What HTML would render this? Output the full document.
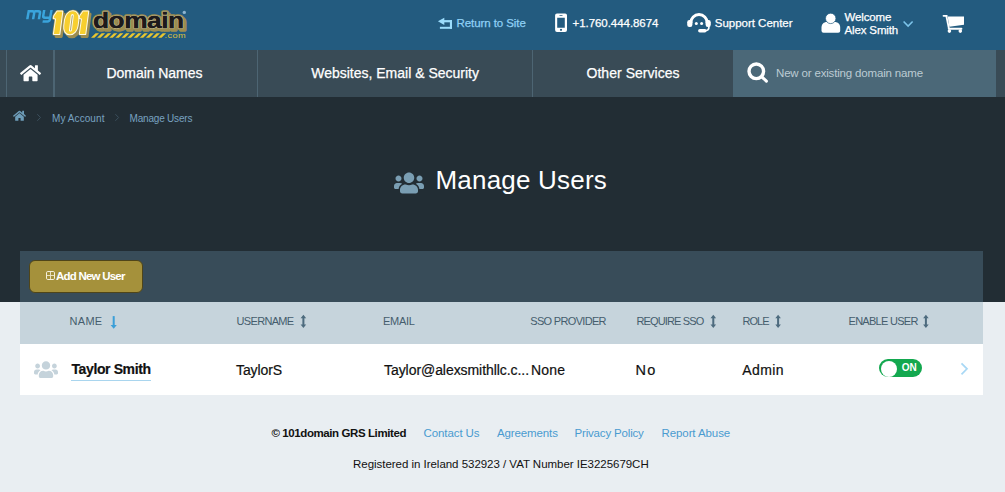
<!DOCTYPE html>
<html>
<head>
<meta charset="utf-8">
<title>Manage Users</title>
<style>
*{box-sizing:border-box;margin:0;padding:0}
html,body{width:1005px;height:492px;overflow:hidden}
body{font-family:"Liberation Sans",sans-serif;background:#e9eef2;position:relative;color:#fff}
.abs{position:absolute;white-space:nowrap}
#hdr{left:0;top:0;width:1005px;height:50px;background:#235b7f}
#nav{left:0;top:50px;width:1005px;height:47px;background:#394b56}
#dark{left:0;top:97px;width:1005px;height:205px;background:#222d34}
.vl{top:50px;height:47px;background:#4d6573}
.navt{top:65px;line-height:16px;font-size:14px;color:#fff;-webkit-text-stroke:0.25px #fff}
#search{left:733px;top:50px;width:263px;height:47px;background:#4b6878}
#toolbar{left:20px;top:251px;width:963px;height:51px;background:#384c59}
#thead{left:20px;top:302px;width:963px;height:42px;background:#c6d4dc}
#row{left:20px;top:344px;width:963px;height:51px;background:#fff}
#btn{left:29px;top:260px;width:114px;height:33px;background:#a5913b;border:1px solid #4f4519;border-radius:6px}
.th{top:314px;line-height:14px;font-size:11px;color:#455d6d}
.td{top:361px;line-height:18px;font-size:14px;color:#111;-webkit-text-stroke:0.2px #111}
.top{font-size:11.5px;color:#fff;-webkit-text-stroke:0.25px currentColor}
.bc{top:112px;font-size:10px;color:#78a2c0;line-height:13px}
.ft{font-size:11.5px;line-height:14px}
svg{position:absolute;overflow:visible}
</style>
</head>
<body>
<div class="abs" id="hdr"></div>
<div class="abs" id="nav"></div>
<div class="abs" id="dark"></div>

<!-- logo -->
<svg id="logo" style="left:0;top:0" width="200" height="50" viewBox="0 0 200 50">
  <g font-family="Liberation Sans, sans-serif" font-weight="bold">
    <g transform="translate(0,19.300) skewX(-10) translate(0,-19.300)" fill="none" stroke="#3aa4dc" stroke-width="2.500" stroke-linejoin="round"><path d="M27.300 19.300V10.100M27.300 11.300H31.100Q33.100 11.300 33.100 13.300V19.300M33.100 11.300H36.900Q38.900 11.300 38.900 13.300V19.300"/><path d="M42.600 10.100V15.600Q42.600 17.800 44.800 17.800H49.900M49.900 10.100V19.600Q49.900 21.500 47.900 21.500H43"/></g>
    <defs><g id="g101">
      <path id="one" d="M57.300 11.500h5l-2.900 22.500h-5.500l2.200-15.200l-2.300-.700l.400-2.100z"/>
      <use href="#one" x="25.900"/>
      <rect x="-6.700" y="-11.500" width="13.400" height="23" rx="6.300" ry="8.500" transform="translate(71.300,22.800) skewX(-7.200)"/>
    </g></defs>
    <use href="#g101" x="2" y="2.600" fill="#9c8d50" stroke="#9c8d50" stroke-width="2.600" stroke-linejoin="round"/>
    <use href="#g101" fill="#9c8d50" stroke="#9c8d50" stroke-width="3.200" stroke-linejoin="round"/>
    <use href="#g101" fill="#fdfbe8" stroke="#fdfbe8" stroke-width="2" stroke-linejoin="round"/>
    <use href="#g101" fill="#f7cf2f"/>
    <g transform="translate(71.400,22.800) skewX(-7.200)"><rect x="-1.500" y="-8.800" width="3" height="17.600" rx="1.500" fill="#fdfbe8"/><rect x="-0.500" y="-7.600" width="1" height="15.200" rx="0.500" fill="#b0a470"/></g>
    <g transform="translate(93,27.900) scale(1.195,1)">
      <text x="1.600" y="2" font-size="22" fill="#9c8d50" stroke="#9c8d50" stroke-width="3.400" stroke-linejoin="round" letter-spacing="-0.400">domain</text>
      <text x="0" y="0" font-size="22" fill="#1d1a1b" stroke="#9c8d50" stroke-width="3.400" paint-order="stroke" stroke-linejoin="round" letter-spacing="-0.400">domain</text>
      <text x="0" y="0" font-size="22" fill="#1d1a1b" stroke="#d8cfa8" stroke-width="1.200" paint-order="stroke" stroke-linejoin="round" letter-spacing="-0.400">domain</text>
      <text x="0" y="0" font-size="22" fill="#1d1a1b" stroke="#1d1a1b" stroke-width="0.300" letter-spacing="-0.400">domain</text>
    </g>
    <g fill="#e9c62f">
      <path d="M91 37.8l4.6-4.6h3.4l-4.6 4.600zM97.100 37.800l4.600-4.600h3.400l-4.600 4.600zM103.200 37.800l4.600-4.600h3.400l-4.600 4.600zM109.300 37.800l4.600-4.600h3.400l-4.600 4.600zM115.400 37.800l4.600-4.600h3.400l-4.600 4.600zM121.500 37.800l4.600-4.600h3.400l-4.600 4.600zM127.600 37.800l4.600-4.600h3.400l-4.600 4.600zM133.700 37.800l4.600-4.600h3.400l-4.600 4.600zM139.800 37.800l4.600-4.600h3.400l-4.600 4.600zM145.900 37.800l4.600-4.600h3.400l-4.600 4.600zM152 37.800l4.600-4.600h3.400l-4.600 4.600zM158.100 37.800l4.600-4.600h3.400l-4.600 4.600z"/>
    </g>
    <text x="164.600" y="37.700" font-size="8" fill="#dfc03c" letter-spacing="0.3" font-weight="normal" transform="translate(164.600,0) scale(1.15,1) translate(-164.600,0)">.com</text>
    <circle cx="184.300" cy="12.400" r="1.700" fill="#8db4cf"/>
  </g>
</svg>

<!-- top links -->
<svg style="left:0;top:0" width="1005" height="50" viewBox="0 0 1005 50">
  <!-- return icon -->
  <g fill="#9bdcfc">
    <path d="M437.900 21.300l6.400-3.600v7.200z"/>
    <rect x="444" y="20.100" width="8" height="2.200"/>
    <rect x="449.900" y="20.100" width="2.100" height="8.700"/>
    <rect x="439.900" y="26.800" width="12.100" height="2"/>
  </g>
  <!-- phone icon -->
  <path fill="#fff" fill-rule="evenodd" d="M557 13.400h8.100a1.900 1.900 0 0 1 1.900 1.900v14.800a1.900 1.900 0 0 1-1.900 1.900H557a1.900 1.900 0 0 1-1.900-1.900V15.300a1.900 1.900 0 0 1 1.900-1.900zM557.200 17.700v10h7.600v-10zM559.500 15.200v0.900h3v-0.900zM561 28.700a1.100 1.100 0 1 0 0.010 0z"/>
  <!-- headset -->
  <g fill="none" stroke="#fff" stroke-linecap="round">
    <path d="M690.800 22.800a8.200 8.200 0 0 1 16.400 0" stroke-width="3"/>
    <path d="M708.900 26.500c0.300 3.200-1.500 4.300-4.500 4.300" stroke-width="1.700"/>
  </g>
  <g fill="#fff">
    <rect x="687.200" y="20.100" width="5.200" height="6.900" rx="2.200"/>
    <rect x="705.600" y="20.100" width="5.200" height="6.900" rx="2.200"/>
    <circle cx="696.300" cy="23.500" r="1.500"/>
    <circle cx="701.600" cy="23.500" r="1.500"/>
    <rect x="698.100" y="29" width="8.400" height="3.400" rx="1.700"/>
  </g>
  <!-- user -->
  <path fill="#fff" d="M821.500 30.800V27.600C821.500 24.300 823.800 22.100 826.900 22.100H834.800C837.900 22.100 840.200 24.300 840.200 27.600V30.800A2 2 0 0 1 838.200 32.800H823.500A2 2 0 0 1 821.500 30.800Z"/>
  <circle cx="830.700" cy="18.400" r="5.200" fill="#fff" stroke="#235b7f" stroke-width="0.700"/>
  <!-- chevron down -->
  <path d="M903.600 21.500l4.500 4.500 4.500-4.500" fill="none" stroke="#7cc4ea" stroke-width="1.600"/>
  <!-- cart -->
  <g fill="#fff">
    <path d="M947.600 16.600H964V24.800L949.400 26.700Z"/>
    <rect x="942.600" y="14.900" width="5" height="1.800" rx="0.900"/>
    <path d="M946.200 15.200l2.700 13.300" stroke="#fff" stroke-width="1.800" fill="none"/>
    <rect x="947.800" y="27.800" width="14.600" height="1.900" rx="0.900"/>
    <circle cx="949.400" cy="31.100" r="1.800"/>
    <circle cx="960.300" cy="31.100" r="1.800"/>
  </g>
</svg>
<div class="abs top" id="t_return" style="left:456.500px;top:15px;line-height:16px;color:#8fd0f5;letter-spacing:-0.08px">Return to Site</div>
<div class="abs top" id="t_phone" style="left:572.500px;top:15px;line-height:16px;letter-spacing:-0.05px">+1.760.444.8674</div>
<div class="abs top" id="t_support" style="left:714.800px;top:15px;line-height:16px;letter-spacing:-0.02px">Support Center</div>
<div class="abs top" id="t_welcome" style="left:844.500px;top:11px;line-height:13px;letter-spacing:-0.15px">Welcome</div>
<div class="abs top" id="t_alex" style="left:844.500px;top:24px;line-height:13px;letter-spacing:-0.14px">Alex Smith</div>

<!-- nav -->
<div class="abs vl" style="left:6px;width:1px"></div>
<div class="abs vl" style="left:53px;width:2px"></div>
<div class="abs vl" style="left:257px;width:1px"></div>
<div class="abs vl" style="left:532px;width:1px"></div>
<svg style="left:20.200px;top:63.550px" width="21.100" height="18.300" viewBox="0 0 576 512" preserveAspectRatio="none"><path fill="#fff" d="M280.370 148.260L96 300.110V464a16 16 0 0 0 16 16l112.060-.290a16 16 0 0 0 15.920-16V368a16 16 0 0 1 16-16h64a16 16 0 0 1 16 16v95.640a16 16 0 0 0 16 16.050L464 480a16 16 0 0 0 16-16V300L295.670 148.260a12.190 12.190 0 0 0-15.300 0zM571.600 251.470L488 182.560V44.050a12 12 0 0 0-12-12h-56a12 12 0 0 0-12 12v72.610L318.470 43a48 48 0 0 0-61 0L4.340 251.470a12 12 0 0 0-1.600 16.900l25.500 31A12 12 0 0 0 45.150 301l235.220-193.740a12.190 12.190 0 0 1 15.300 0L530.900 301a12 12 0 0 0 16.900-1.600l25.500-31a12 12 0 0 0-1.700-16.930z"/></svg>
<div class="abs navt" id="n1" style="left:106.500px;letter-spacing:-0.05px">Domain Names</div>
<div class="abs navt" id="n2" style="left:311.200px;letter-spacing:0px">Websites, Email &amp; Security</div>
<div class="abs navt" id="n3" style="left:586.500px;letter-spacing:0.04px">Other Services</div>
<div class="abs" id="search"></div>
<svg style="left:0;top:50px" width="1005" height="47" viewBox="0 50 1005 47">
  <circle cx="756.300" cy="71.300" r="7.300" fill="none" stroke="#fff" stroke-width="3.400"/>
  <path d="M761.800 76.800l4.600 4.400" stroke="#fff" stroke-width="3" stroke-linecap="round"/>
</svg>
<div class="abs" id="ph" style="left:776px;top:66px;font-size:11.5px;line-height:15px;color:#bccbd3;letter-spacing:-0.17px">New or existing domain name</div>

<!-- breadcrumb -->
<svg style="left:13.400px;top:110.200px" width="13" height="11.550" viewBox="0 0 576 512"><path fill="#6d9cb8" d="M280.370 148.260L96 300.110V464a16 16 0 0 0 16 16l112.060-.290a16 16 0 0 0 15.920-16V368a16 16 0 0 1 16-16h64a16 16 0 0 1 16 16v95.640a16 16 0 0 0 16 16.050L464 480a16 16 0 0 0 16-16V300L295.670 148.260a12.190 12.190 0 0 0-15.300 0zM571.600 251.470L488 182.560V44.050a12 12 0 0 0-12-12h-56a12 12 0 0 0-12 12v72.610L318.470 43a48 48 0 0 0-61 0L4.340 251.470a12 12 0 0 0-1.600 16.900l25.500 31A12 12 0 0 0 45.150 301l235.220-193.740a12.190 12.190 0 0 1 15.300 0L530.900 301a12 12 0 0 0 16.900-1.600l25.500-31a12 12 0 0 0-1.700-16.930z"/></svg>
<svg style="left:0;top:97px" width="300" height="40" viewBox="0 97 300 40">
  <path d="M37.300 114.200l3.200 3.300-3.200 3.300M115.400 114.200l3.200 3.300-3.200 3.300" fill="none" stroke="#3b4f5c" stroke-width="1"/>
</svg>
<div class="abs bc" id="b1" style="left:52px;letter-spacing:0.08px">My Account</div>
<div class="abs bc" id="b2" style="left:129.500px;letter-spacing:-0.19px">Manage Users</div>

<!-- title -->
<svg style="left:394.100px;top:170.600px" width="30" height="24" viewBox="0 0 640 512"><path fill="#7a9eb3" d="M96 224c35.300 0 64-28.700 64-64s-28.700-64-64-64-64 28.700-64 64 28.700 64 64 64zm448 0c35.300 0 64-28.700 64-64s-28.700-64-64-64-64 28.700-64 64 28.700 64 64 64zm32 32h-64c-17.600 0-33.500 7.100-45.100 18.600 40.300 22.100 68.900 62 75.100 109.400h66c17.700 0 32-14.300 32-32v-32c0-35.300-28.700-64-64-64zm-256 0c61.900 0 112-50.100 112-112S381.900 32 320 32 208 82.100 208 144s50.100 112 112 112zm76.800 32h-8.300c-20.800 10-43.900 16-68.500 16s-47.600-6-68.500-16h-8.300C179.600 288 128 339.600 128 403.200V432c0 26.500 21.500 48 48 48h288c26.500 0 48-21.500 48-48v-28.800c0-63.600-51.600-115.200-115.200-115.200zm-223.700-13.400C161.500 263.100 145.600 256 128 256H64c-35.300 0-64 28.700-64 64v32c0 17.700 14.300 32 32 32h65.900c6.300-47.400 34.900-87.300 75.200-109.400z"/></svg>
<div class="abs" id="title" style="left:435.500px;top:164px;font-size:26px;line-height:32px;color:#fff;letter-spacing:0.2px">Manage Users</div>

<div class="abs" id="toolbar"></div>
<div class="abs" id="btn"></div>
<svg style="left:45.500px;top:270.800px" width="9" height="9" viewBox="0 0 9 9"><rect x="0.500" y="0.500" width="8" height="8" rx="1.300" fill="none" stroke="#f4efdc" stroke-width="1"/><path d="M4.500 1v7M1 4.500h7" stroke="#efe8cc" stroke-width="0.900"/></svg>
<div class="abs" id="addnew" style="left:56px;top:267.500px;font-size:11.500px;font-weight:bold;line-height:16px;color:#fff;letter-spacing:-0.78px">Add New User</div>

<div class="abs" id="thead"></div>
<div class="abs th" id="h1" style="left:69.500px;letter-spacing:0.3px">NAME</div>
<div class="abs th" id="h2" style="left:236.600px;letter-spacing:-0.69px">USERNAME</div>
<div class="abs th" id="h3" style="left:383px;letter-spacing:-0.3px">EMAIL</div>
<div class="abs th" id="h4" style="left:530.300px;letter-spacing:-0.68px">SSO PROVIDER</div>
<div class="abs th" id="h5" style="left:636.500px;letter-spacing:-0.86px">REQUIRE SSO</div>
<div class="abs th" id="h6" style="left:742.400px;letter-spacing:-0.9px">ROLE</div>
<div class="abs th" id="h7" style="left:848.500px;letter-spacing:-0.71px">ENABLE USER</div>
<svg style="left:0;top:302px" width="1005" height="42" viewBox="0 302 1005 42">
  <g fill="#3b9fd8"><rect x="112.700" y="316.100" width="2" height="10"/><path d="M110.600 325l3.100 3.700 3.100-3.700z"/></g>
  <g fill="#4d6b7e" id="sorts">
    <path id="srt" d="M303.400 314.800l2.800 3.400h-1.800v6.300h1.800l-2.800 3.400-2.800-3.400h1.800v-6.300h-1.800z"/>
    <use href="#srt" x="409.900"/>
    <use href="#srt" x="474.700"/>
    <use href="#srt" x="622.500"/>
  </g>
</svg>

<div class="abs" id="row"></div>
<svg style="left:34px;top:359.800px" width="24" height="19.200" viewBox="0 0 640 512"><path fill="#c5d3db" d="M96 224c35.300 0 64-28.700 64-64s-28.700-64-64-64-64 28.700-64 64 28.700 64 64 64zm448 0c35.300 0 64-28.700 64-64s-28.700-64-64-64-64 28.700-64 64 28.700 64 64 64zm32 32h-64c-17.600 0-33.500 7.100-45.100 18.600 40.300 22.100 68.900 62 75.100 109.400h66c17.700 0 32-14.300 32-32v-32c0-35.300-28.700-64-64-64zm-256 0c61.900 0 112-50.100 112-112S381.900 32 320 32 208 82.100 208 144s50.100 112 112 112zm76.800 32h-8.300c-20.800 10-43.900 16-68.500 16s-47.600-6-68.500-16h-8.300C179.600 288 128 339.600 128 403.200V432c0 26.500 21.500 48 48 48h288c26.500 0 48-21.500 48-48v-28.800c0-63.600-51.600-115.200-115.200-115.200zm-223.700-13.400C161.500 263.100 145.600 256 128 256H64c-35.300 0-64 28.700-64 64v32c0 17.700 14.300 32 32 32h65.900c6.300-47.400 34.900-87.300 75.200-109.400z"/></svg>
<div class="abs td" id="d1" style="left:71.500px;top:360px;font-size:14px;font-weight:bold;letter-spacing:-0.39px">Taylor Smith</div>
<div class="abs" style="left:71px;top:380px;width:80px;height:1px;background:#a9d5ee"></div>
<div class="abs td" id="d2" style="left:236px;letter-spacing:-0.1px">TaylorS</div>
<div class="abs td" id="d3" style="left:384px;letter-spacing:-0.06px">Taylor@alexsmithllc.c...</div>
<div class="abs td" id="d4" style="left:530.900px;letter-spacing:0.2px">None</div>
<div class="abs td" id="d5" style="left:635.500px;font-size:14.500px;letter-spacing:1.2px">No</div>
<div class="abs td" id="d6" style="left:742.300px;letter-spacing:0.37px">Admin</div>
<div class="abs" style="left:879px;top:359px;width:43px;height:18px;border-radius:9px;background:#13a84f"></div>
<div class="abs" style="left:880.700px;top:360.500px;width:16px;height:16px;border-radius:8px;background:#fff"></div>
<div class="abs" id="on" style="left:901.800px;top:361.500px;font-size:10px;line-height:12px;font-weight:bold;color:#fff;letter-spacing:0px">ON</div>
<svg style="left:955px;top:355px" width="20" height="26" viewBox="955 355 20 26"><path d="M961.500 363.300l5.500 5.500-5.500 5.500" fill="none" stroke="#a8d8f5" stroke-width="1.700"/></svg>

<!-- footer -->
<div class="abs ft" id="f1" style="left:271.500px;top:426px;color:#111;font-weight:bold;letter-spacing:-0.41px">© 101domain GRS Limited</div>
<div class="abs ft" id="f2" style="left:423.500px;top:426px;color:#4a9bd0;letter-spacing:-0.09px">Contact Us</div>
<div class="abs ft" id="f3" style="left:497px;top:426px;color:#4a9bd0;letter-spacing:-0.12px">Agreements</div>
<div class="abs ft" id="f4" style="left:574.500px;top:426px;color:#4a9bd0;letter-spacing:-0.17px">Privacy Policy</div>
<div class="abs ft" id="f5" style="left:661.500px;top:426px;color:#4a9bd0;letter-spacing:-0.09px">Report Abuse</div>
<div class="abs ft" id="f6" style="left:353px;top:457px;color:#111;letter-spacing:-0.03px">Registered in Ireland 532923 / VAT Number IE3225679CH</div>
</body>
</html>
